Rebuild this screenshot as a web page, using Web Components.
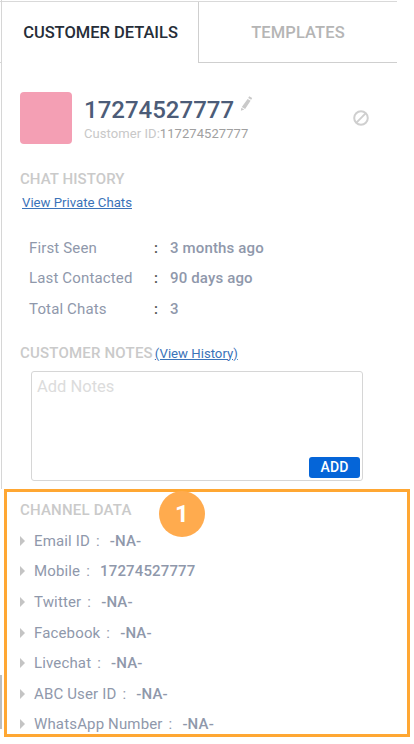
<!DOCTYPE html>
<html lang="en"><head><meta charset="utf-8"><title>Customer details</title>
<style>
html,body{margin:0;padding:0;background:#fff}
body{font-family:Roboto,"Liberation Sans",sans-serif;width:414px;height:744px;overflow:hidden}
</style></head><body>
<customer-panel>
  <tab-bar></tab-bar>
  <customer-head name="17274527777" cid="117274527777"></customer-head>
  <section-title style="--top:26px">CHAT HISTORY</section-title>
  <stat-list></stat-list>
  <notes-box></notes-box>
  <channel-data></channel-data>
</customer-panel>
<script>
function def(name, html, init){
  customElements.define(name, class extends HTMLElement{
    constructor(){super();this.attachShadow({mode:'open'}).innerHTML=html;}
    connectedCallback(){ if(init) init(this); }
  });
}
def('customer-panel',`<style>
:host{display:block;box-sizing:border-box;width:414px;height:744px;position:relative;padding-top:1px;color:#8a93a6}
.edge{position:absolute;left:1px;top:0;width:1px;height:489px;background:#d6d6d6}
.dark{position:absolute;left:0;top:675px;width:2px;height:54px;background:#bdbdbd}
.stub{position:absolute;left:0;top:62px;width:2px;height:1px;background:#d6d6d6}
</style><div class="edge"></div><div class="stub"></div><div class="dark"></div><slot></slot>`);
def('tab-bar',`<style>
:host{display:flex;width:397px;height:62px;box-sizing:border-box;border-top:1.5px solid #d9d9d9;font-size:16.5px;font-weight:500;letter-spacing:-.02px}
div{display:flex;align-items:center;justify-content:center;box-sizing:border-box;height:61px}
.a{width:199px;color:#262d38;border-right:1px solid #cfcfcf;padding-left:3px}
.b{flex:1;color:#b5b5b5;border-bottom:1px solid #cfcfcf;letter-spacing:.1px}
</style><div class="a">CUSTOMER DETAILS</div><div class="b">TEMPLATES</div>`);
def('customer-head',`<style>
:host{display:flex;align-items:flex-start;width:397px;box-sizing:border-box;padding:29px 0 0 20px}
.av{width:52px;height:52px;border-radius:4px;background:#f49fb4;flex:none}
.t{margin-left:12px;flex:1}
.n{display:flex;align-items:flex-start;font-size:24px;font-weight:500;color:#4c5c78;line-height:30px;height:30px;margin-top:3px}
.n svg{margin:0 0 0 5px}
.c{font-size:13px;line-height:16px;margin-top:1px;color:#c8c8c8;letter-spacing:.07px}
.c b{font-weight:400;color:#a0a0a0}
.ban{margin:18px 28px 0 0;flex:none}
</style><div class="av"></div><div class="t"><div class="n"><span id="n"></span>
<svg width="14" height="16" viewBox="0 0 14 16"><path d="M10.2 1.2l3 1.8-1 1.7-3-1.8zM8.6 3.9l3 1.8-5.5 8.2-3.3-1.9zM2.3 12.8l3 1.8-3.4 1.2z" fill="#c9c9c9"/></svg></div>
<div class="c">Customer ID:<b id="c"></b></div></div>
<svg class="ban" width="16" height="16" viewBox="0 0 16 16" fill="none" stroke="#cfcfcf" stroke-width="2"><circle cx="8" cy="8" r="6.8"/><path d="M3.4 12.6L12.6 3.4"/></svg>`,
el=>{el.shadowRoot.getElementById('n').textContent=el.getAttribute('name');el.shadowRoot.getElementById('c').textContent=el.getAttribute('cid');});
def('section-title',`<style>
:host{display:block;margin:var(--top,0) 0 0 20px;font-size:15px;font-weight:500;line-height:18px;letter-spacing:.08px;color:#cacaca}
</style><slot></slot>`);
def('link-text',`<style>
:host{display:inline;font-size:13.2px;font-weight:400;letter-spacing:0;color:#3b73b9;text-decoration:underline}
</style><slot></slot>`);
def('stat-list',`<style>
:host{display:block;padding-left:29px;font-size:15px;letter-spacing:.15px;color:#8f98ab}
.l{display:block;margin:7px 0 0 -7px;font-size:13px;line-height:16px;letter-spacing:0}
.g{display:grid;grid-template-columns:125px 1fr;grid-auto-rows:30.5px;align-items:center;margin-top:21.5px}
.v{font-weight:500;display:flex}
.v i{font-style:normal;color:#555;width:16px;font-weight:500}
</style><div class="l"><link-text>View Private Chats</link-text></div>
<div class="g"><div>First Seen</div><div class="v"><i>:</i>3 months ago</div>
<div>Last Contacted</div><div class="v"><i>:</i>90 days ago</div>
<div>Total Chats</div><div class="v"><i>:</i>3</div></div>`);
def('notes-box',`<style>
:host{display:block;margin-top:19.5px}
.h{display:flex;align-items:baseline;margin-left:20px;font-size:15px;font-weight:500;line-height:18px;letter-spacing:.2px;color:#cacaca;gap:2px}
.b{box-sizing:border-box;width:332px;height:110px;margin:8px 0 0 31px;border:1px solid #d6d6d6;border-radius:3px;padding:6px 2px 2px 5px;display:flex;flex-direction:column;justify-content:space-between}
.p{font-size:16.5px;line-height:18px;color:#dcdcdc}
button{align-self:flex-end;width:51px;height:21px;border:0;border-radius:3px;background:#0565d8;color:#fff;font:500 14px Roboto,sans-serif;padding:0;letter-spacing:.2px}
</style><div class="h">CUSTOMER NOTES<link-text>(View History)</link-text></div>
<div class="b"><div class="p">Add Notes</div><button>ADD</button></div>`);
def('channel-row',`<style>
:host{display:flex;align-items:center;height:30.6px;font-size:15px;letter-spacing:.15px;color:#8f98ab}
svg{flex:none;margin-right:9px}
.k{white-space:pre}
.s{margin:0 10px 0 6px}
.v{font-weight:500}
</style><svg width="5" height="10" viewBox="0 0 5 10"><path d="M0 0l5 5-5 5z" fill="#c4c4c4"/></svg><span class="k" id="k"></span><span class="s">:</span><span class="v" id="v"></span>`,
el=>{el.shadowRoot.getElementById('k').textContent=el.getAttribute('k');el.shadowRoot.getElementById('v').textContent=el.getAttribute('v');});
def('channel-data',`<style>
:host{display:block;box-sizing:border-box;position:relative;width:406px;height:248px;margin:8px 0 0 4px;border:3px solid #ffa733;padding:9px 0 0 13px}
.t{font-size:15px;font-weight:500;line-height:18px;letter-spacing:.2px;color:#cacaca;margin-bottom:7px}
.badge{position:absolute;left:152px;top:-1px;width:46px;height:46px;border-radius:50%;background:#ffab4e;color:#fff;font:700 24px/46px Roboto,sans-serif;text-align:center}
</style><div class="t">CHANNEL DATA</div>
<channel-row k="Email ID" v="-NA-"></channel-row>
<channel-row k="Mobile" v="17274527777"></channel-row>
<channel-row k="Twitter" v="-NA-"></channel-row>
<channel-row k="Facebook" v="-NA-"></channel-row>
<channel-row k="Livechat" v="-NA-"></channel-row>
<channel-row k="ABC User ID" v="-NA-"></channel-row>
<channel-row k="WhatsApp Number" v="-NA-"></channel-row>
<div class="badge">1</div>`);
</script>
</body></html>
